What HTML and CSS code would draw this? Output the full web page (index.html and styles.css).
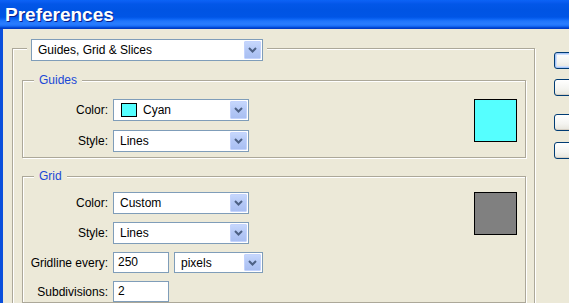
FILE: index.html
```html
<!DOCTYPE html>
<html>
<head>
<meta charset="utf-8">
<title>Preferences</title>
<link rel="stylesheet" href="styles.css">
</head>
<body>
<div class="window">
  <div class="titlebar">Preferences</div>
  <div class="client">
    <div class="main">
      <div class="group outer">
        <div class="legend legend-select">
          <div class="combo combo-main"><span class="combo-text">Guides, Grid &amp; Slices</span><span class="arrow"><svg width="9" height="6" viewBox="0 0 9 6"><polyline points="1,1 4.5,4.5 8,1" fill="none" stroke="#4d6185" stroke-width="2"/></svg></span></div>
        </div>

        <div class="group sub">
          <div class="legend legend-text">Guides</div>
          <div class="group-body guides-body">
            <div class="form">
              <span class="label">Color:</span>
              <div class="combo combo-field"><span class="chip chip-cyan"></span><span class="combo-text">Cyan</span><span class="arrow"><svg width="9" height="6" viewBox="0 0 9 6"><polyline points="1,1 4.5,4.5 8,1" fill="none" stroke="#4d6185" stroke-width="2"/></svg></span></div>
              <span class="label">Style:</span>
              <div class="combo combo-field"><span class="combo-text">Lines</span><span class="arrow"><svg width="9" height="6" viewBox="0 0 9 6"><polyline points="1,1 4.5,4.5 8,1" fill="none" stroke="#4d6185" stroke-width="2"/></svg></span></div>
            </div>
            <div class="swatch swatch-cyan"></div>
          </div>
        </div>

        <div class="group sub grid-group">
          <div class="legend legend-text">Grid</div>
          <div class="group-body grid-body">
            <div class="form">
              <span class="label">Color:</span>
              <div class="combo combo-field"><span class="combo-text">Custom</span><span class="arrow"><svg width="9" height="6" viewBox="0 0 9 6"><polyline points="1,1 4.5,4.5 8,1" fill="none" stroke="#4d6185" stroke-width="2"/></svg></span></div>
              <span class="label">Style:</span>
              <div class="combo combo-field"><span class="combo-text">Lines</span><span class="arrow"><svg width="9" height="6" viewBox="0 0 9 6"><polyline points="1,1 4.5,4.5 8,1" fill="none" stroke="#4d6185" stroke-width="2"/></svg></span></div>
              <span class="label">Gridline every:</span>
              <div class="pair">
                <div class="textbox">250</div>
                <div class="combo combo-unit"><span class="combo-text">pixels</span><span class="arrow"><svg width="9" height="6" viewBox="0 0 9 6"><polyline points="1,1 4.5,4.5 8,1" fill="none" stroke="#4d6185" stroke-width="2"/></svg></span></div>
              </div>
              <span class="label">Subdivisions:</span>
              <div class="pair">
                <div class="textbox">2</div>
              </div>
            </div>
            <div class="swatch swatch-gray"></div>
          </div>
        </div>
      </div>
    </div>
    <div class="buttons">
      <button class="btn btn-default" aria-label="OK"></button>
      <button class="btn btn-2" aria-label="Cancel"></button>
      <button class="btn btn-3" aria-label="Prev"></button>
      <button class="btn btn-4" aria-label="Next"></button>
    </div>
  </div>
</div>
</body>
</html>
```

FILE: styles.css
```css
html, body {
  margin: 0;
  padding: 0;
  width: 569px;
  height: 303px;
  overflow: hidden;
  background: #ece9d8;
}

.window {
  display: flex;
  flex-direction: column;
  width: 569px;
  height: 303px;
  overflow: hidden;
  font-family: "Liberation Sans", Arial, sans-serif;
  font-size: 12px;
  color: #000;
}

.titlebar {
  flex: 0 0 29px;
  height: 29px;
  line-height: 29px;
  box-sizing: border-box;
  padding-left: 5px;
  color: #fff;
  font-weight: bold;
  font-size: 19px;
  text-shadow: 1px 1px 0 #0a1f8a;
  background: linear-gradient(to bottom,
    #0b63f6 0px, #0a5cf0 2px, #0257e8 4px, #0054e3 10px,
    #0055e6 17px, #0a63f4 19px, #2176fb 21px, #2a7dff 24px,
    #1a6ff8 26px, #0a56e0 27px, #0040cc 28px, #0038c0 29px);
}

.client {
  flex: 1;
  display: flex;
  border-left: 3px solid #0a4fdc;
  min-height: 0;
  overflow: hidden;
}

.main {
  flex: 0 0 523px;
  margin-left: 9px;
  margin-top: 19px;
}

.group {
  border: 1px solid #aca899;
  box-shadow: inset 1px 1px 0 #fff, 1px 1px 0 #fff;
}

.outer {
  height: 300px;
}

.legend {
  background: #ece9d8;
  display: flex;
  width: max-content;
  position: relative;
}

.legend-select {
  margin-top: -10px;
  margin-left: 14px;
  padding: 0 4px;
}

.legend-text {
  margin-top: -8px;
  margin-left: 11px;
  padding: 0 5px;
  line-height: 14px;
  height: 14px;
  color: #1a48d6;
}

.sub {
  margin: 19px 8px 0 9px;
}

.grid-group {
  margin-top: 18px;
}

.group-body {
  display: flex;
  align-items: flex-start;
}

.guides-body {
  margin-top: 12px;
  padding-bottom: 5px;
}

.grid-body {
  margin-top: 9px;
}

.form {
  display: grid;
  grid-template-columns: 85px max-content;
  column-gap: 5px;
  row-gap: 8px;
  align-items: center;
}

.guides-body .form {
  row-gap: 9px;
}

.label {
  text-align: right;
  white-space: nowrap;
}

.combo {
  box-sizing: border-box;
  display: flex;
  align-items: center;
  height: 22px;
  border: 1px solid #7f9db9;
  background: #fff;
  padding: 1px;
}

.combo-main {
  width: 232px;
}

.combo-field {
  width: 136px;
}

.combo-unit {
  width: 89px;
  height: 21px;
}

.combo-text {
  flex: 1;
  padding-left: 5px;
  white-space: nowrap;
  overflow: hidden;
}

.chip {
  box-sizing: border-box;
  flex: 0 0 16px;
  height: 14px;
  margin-left: 6px;
  margin-right: 1px;
  border: 1px solid #000;
}

.chip-cyan {
  background: #55ffff;
}

.arrow {
  box-sizing: border-box;
  flex: 0 0 17px;
  height: 18px;
  display: flex;
  align-items: center;
  justify-content: center;
  border: 1px solid #c3d3fd;
  border-radius: 1px;
  background: linear-gradient(to bottom, #c6d7fc 0%, #b4c8f6 50%, #a9bff2 100%);
}

.combo-unit .arrow {
  height: 17px;
}

.pair {
  display: flex;
  gap: 5px;
}

.textbox {
  box-sizing: border-box;
  width: 56px;
  height: 21px;
  line-height: 19px;
  border: 1px solid #7f9db9;
  background: #fff;
  padding-left: 4px;
}

.swatch {
  box-sizing: border-box;
  width: 43px;
  height: 43px;
  margin-left: auto;
  margin-right: 8px;
  border: 1px solid #000;
}

.swatch-cyan {
  background: #55ffff;
}

.swatch-gray {
  background: #808080;
}

.buttons {
  display: flex;
  flex-direction: column;
  margin-left: 19px;
  padding-top: 23px;
}

.btn {
  box-sizing: border-box;
  display: block;
  width: 75px;
  height: 17px;
  padding: 0;
  border: 1px solid #003c74;
  border-radius: 3px;
  background: linear-gradient(to bottom, #ffffff 0%, #f4f4f0 60%, #e6e5dc 100%);
  box-shadow: inset 0 -1px 0 #d6d0c5;
  font: inherit;
}

.btn-default {
  box-shadow: inset 0 0 0 1px #a8c6f8, inset 0 0 0 2px #cfe0fc;
}

.btn-2 {
  margin-top: 10px;
}

.btn-3 {
  margin-top: 18px;
}

.btn-4 {
  margin-top: 11px;
}
```
